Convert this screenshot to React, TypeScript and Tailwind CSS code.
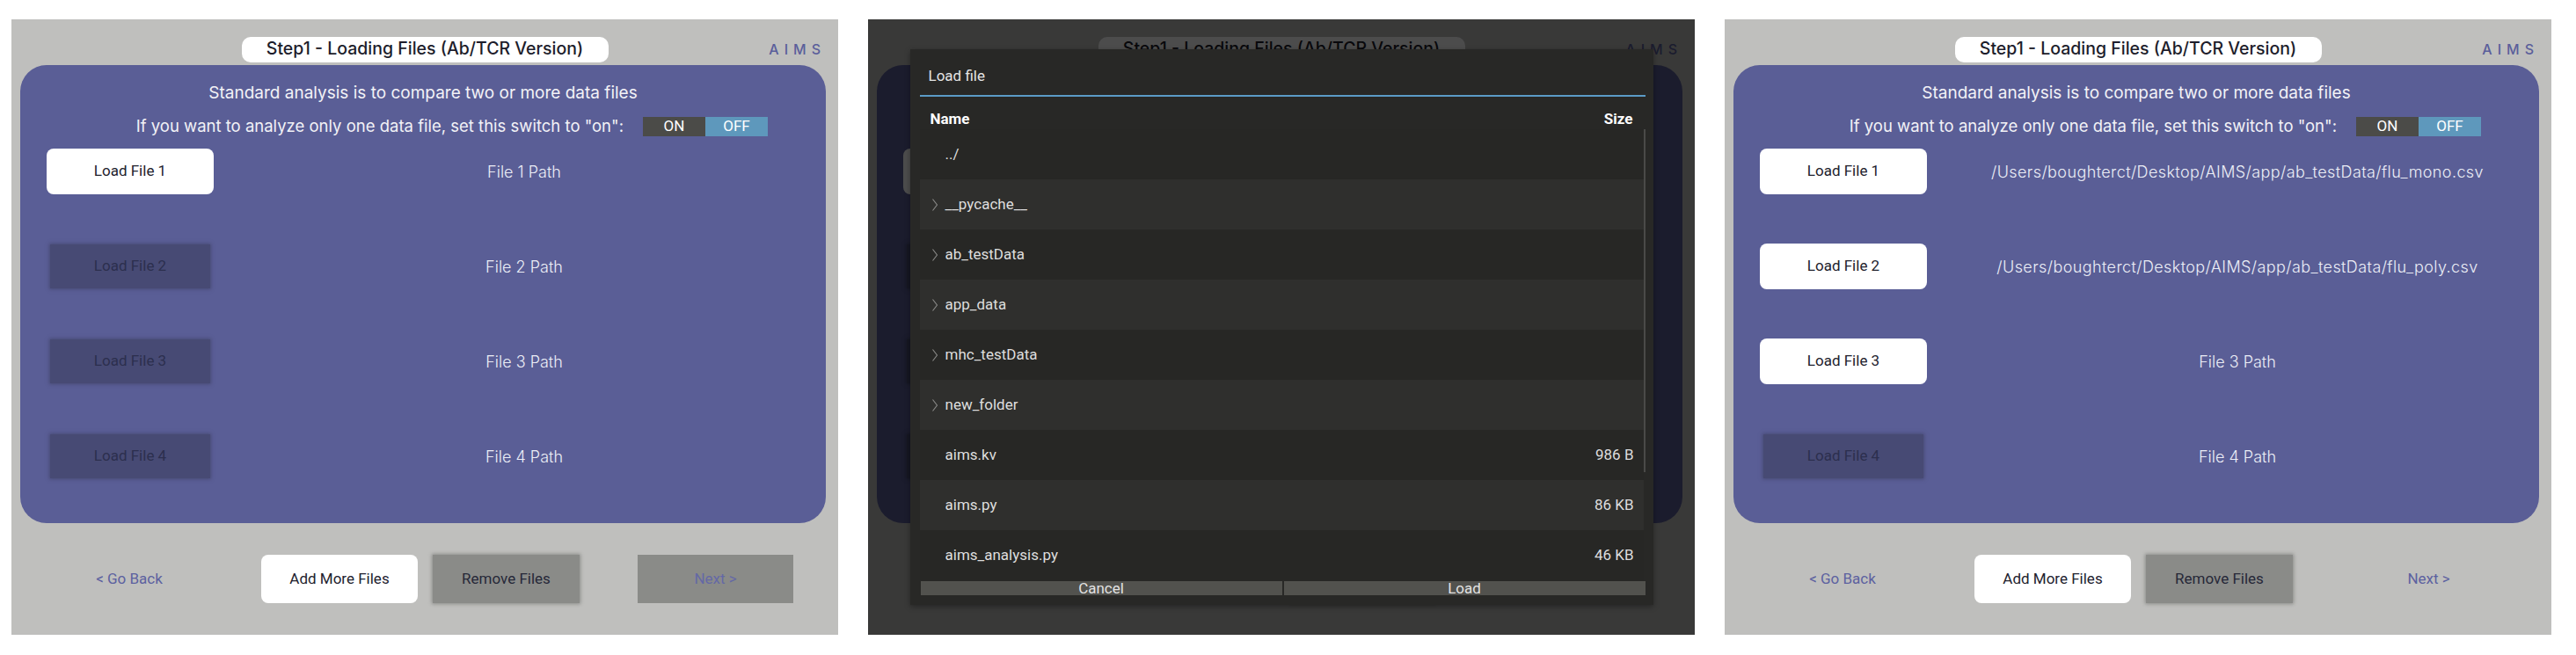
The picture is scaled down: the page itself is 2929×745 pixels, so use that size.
import React from 'react';

const poppins = { fontFamily: 'Inter, "Noto Sans", sans-serif' };
const roboto = { fontFamily: 'Roboto, "Liberation Sans", sans-serif' };

type ScreenProps = {
    paths: string[];
    enabled: boolean[];
    nextEnabled: boolean;
    covered?: boolean;
};

function LoadButton({ label, enabled, covered }: { label: string; enabled: boolean; covered?: boolean }) {
    if (enabled) {
        return (
            <div className="w-[190px] h-[52px] shrink-0 ml-[30px] rounded-[8px] bg-white flex items-center justify-center text-[17px] text-[#22222e]" style={roboto}>
                <span className={covered ? 'invisible' : ''}>{label}</span>
            </div>
        );
    }
    return (
        <div className="w-[190px] h-[52px] shrink-0 ml-[30px] flex items-center justify-center">
            <div className="w-[182px] h-[50px] bg-[#474a74] shadow-[0_0_4px_1px_#474a74] flex items-center justify-center text-[17px] text-[#2c2f4e]" style={roboto}>
                <span className={covered ? 'invisible' : ''}>{label}</span>
            </div>
        </div>
    );
}

function Screen({ paths, enabled, nextEnabled, covered }: ScreenProps) {
    const hidden = covered ? 'invisible' : '';
    return (
        <div className="w-[940px] h-[700px] shrink-0 bg-[#bfbfbd] flex flex-col">
            {/* header */}
            <div className="grid grid-cols-[1fr_auto_1fr] items-center pt-[16px] h-[52px]">
                <div />
                <div className="w-[417px] h-[29px] rounded-[10px] bg-white flex items-center justify-center text-[19.5px] font-medium text-[#1d1d2b] whitespace-nowrap" style={poppins}>
                    Step1 - Loading Files (Ab/TCR Version)
                </div>
                <div className="flex justify-end pr-[14px] text-[16px] font-medium tracking-[6px] text-[#5a5e9b]" style={poppins}>
                    AIMS
                </div>
            </div>

            {/* main panel */}
            <div className="ml-[10px] w-[916px] h-[521px] rounded-[30px] bg-[#5a5e96] flex flex-col pt-[20px]">
                <div className={`h-[24px] leading-[24px] text-center text-[19px] text-[#f2f2f6] ${hidden}`} style={poppins}>
                    Standard analysis is to compare two or more data files
                </div>
                <div className="mt-[12px] grid grid-cols-[686px_142px] gap-x-[22px] items-center h-[22px]">
                    <div className={`text-right text-[18.5px] text-[#f2f2f6] whitespace-nowrap ${hidden}`} style={poppins}>
                        If you want to analyze only one data file, set this switch to "on":
                    </div>
                    <div className="flex h-[22px] text-[17px] text-white" style={roboto}>
                        <div className="w-[71px] bg-[#4b4b48] flex items-center justify-center">
                            <span className={hidden}>ON</span>
                        </div>
                        <div className="w-[71px] bg-[#5e98bc] flex items-center justify-center">
                            <span className={hidden}>OFF</span>
                        </div>
                    </div>
                </div>

                <div className="mt-[17px] flex flex-col gap-[56px]">
                    {paths.map((p, i) => (
                        <div key={i} className="h-[52px] flex items-center">
                            <LoadButton label={`Load File ${i + 1}`} enabled={enabled[i]} covered={covered} />
                            <div
                                className={`flex-1 pl-[10px] text-center text-[18px] font-light text-[#eceef6] whitespace-nowrap ${p.startsWith('/') ? 'tracking-[0.4px]' : ''} ${hidden}`}
                                style={poppins}
                            >
                                {p}
                            </div>
                        </div>
                    ))}
                </div>
            </div>

            {/* bottom bar */}
            <div className="mt-[36px] h-[55px] flex items-stretch text-[17px]" style={roboto}>
                <div className="ml-[45px] w-[178px] flex items-center justify-center text-[#5c61a0]">
                    <span className={hidden}>&lt; Go Back</span>
                </div>
                <div className="ml-[61px] w-[178px] rounded-[8px] bg-white flex items-center justify-center text-[#22222e]">
                    <span className={hidden}>Add More Files</span>
                </div>
                <div className="ml-[17px] w-[167px] bg-[#8a8b88] shadow-[0_0_4px_1px_#8a8b88] flex items-center justify-center text-[#262838]">
                    <span className={hidden}>Remove Files</span>
                </div>
                <div
                    className={`ml-[66px] w-[177px] flex items-center justify-center ${nextEnabled ? 'text-[#5c61a0]' : 'bg-[#8a8b88] text-[#6468a6]'}`}
                >
                    <span className={hidden}>Next &gt;</span>
                </div>
            </div>
        </div>
    );
}

const defaultPaths = ['File 1 Path', 'File 2 Path', 'File 3 Path', 'File 4 Path'];

const files = [
    { name: '../', dir: false, size: '' },
    { name: '__pycache__', dir: true, size: '' },
    { name: 'ab_testData', dir: true, size: '' },
    { name: 'app_data', dir: true, size: '' },
    { name: 'mhc_testData', dir: true, size: '' },
    { name: 'new_folder', dir: true, size: '' },
    { name: 'aims.kv', dir: false, size: '986 B' },
    { name: 'aims.py', dir: false, size: '86 KB' },
    { name: 'aims_analysis.py', dir: false, size: '46 KB' },
];

function Chevron() {
    return (
        <svg width="8" height="16" viewBox="0 0 8 16" className="shrink-0">
            <polyline points="1.5,1.5 6.5,8 1.5,14.5" fill="none" stroke="#8c8c8a" strokeWidth="1.1" />
        </svg>
    );
}

function FileDialog() {
    return (
        <div className="w-[845px] h-[632px] bg-[#282826] shadow-[0_2px_6px_rgba(0,0,0,0.35)] flex flex-col text-[#dedede]" style={roboto}>
            <div className="h-[52px] pt-[10px] px-[21px] flex items-center text-[17px] text-[#e4e4e4]">Load file</div>
            <div className="ml-[11px] mr-[9px] h-[2px] bg-[#5b9bc6]" />
            <div className="h-[37px] pt-[14px] ml-[11px] mr-[11px] px-[12px] flex items-center justify-between text-[17px] font-bold text-white">
                <span>Name</span>
                <span>Size</span>
            </div>
            <div className="ml-[11px] mr-[9px] h-[513px] flex">
                <div className="flex-1 flex flex-col">
                    {files.map((f, i) => (
                        <div
                            key={f.name}
                            className={`h-[57px] shrink-0 flex items-center pl-[13px] pr-[11px] text-[17px] ${i % 2 === 1 ? 'bg-[#2f2f2d]' : 'bg-[#272725]'}`}
                        >
                            <div className="w-[16px] flex items-center">{f.dir && <Chevron />}</div>
                            <span className="flex-1">{f.name}</span>
                            <span>{f.size}</span>
                        </div>
                    ))}
                </div>
                <div className="w-[2px] flex flex-col">
                    <div className="h-[390px] bg-[#4a4a48]" />
                </div>
            </div>
            <div className="ml-[12px] mr-[9px] mt-[1px] h-[16px] flex gap-[2px] text-[17px] text-[#e2e2e2]">
                <div className="flex-1 bg-[#52524e] leading-[16px] text-center">Cancel</div>
                <div className="flex-1 bg-[#52524e] leading-[16px] text-center">Load</div>
            </div>
        </div>
    );
}

export default function App() {
    return (
        <div className="w-[2929px] h-[745px] bg-white flex items-start pt-[22px] pl-[13px] gap-[34px]">
            <Screen paths={defaultPaths} enabled={[true, false, false, false]} nextEnabled={false} />

            <div className="relative w-[940px] h-[700px] shrink-0">
                <Screen paths={defaultPaths} enabled={[true, false, false, false]} nextEnabled={false} covered />
                <div className="absolute inset-0 bg-black/70 flex items-center justify-center">
                    <FileDialog />
                </div>
            </div>

            <Screen
                paths={[
                    '/Users/boughterct/Desktop/AIMS/app/ab_testData/flu_mono.csv',
                    '/Users/boughterct/Desktop/AIMS/app/ab_testData/flu_poly.csv',
                    'File 3 Path',
                    'File 4 Path',
                ]}
                enabled={[true, true, true, false]}
                nextEnabled={true}
            />
        </div>
    );
}
